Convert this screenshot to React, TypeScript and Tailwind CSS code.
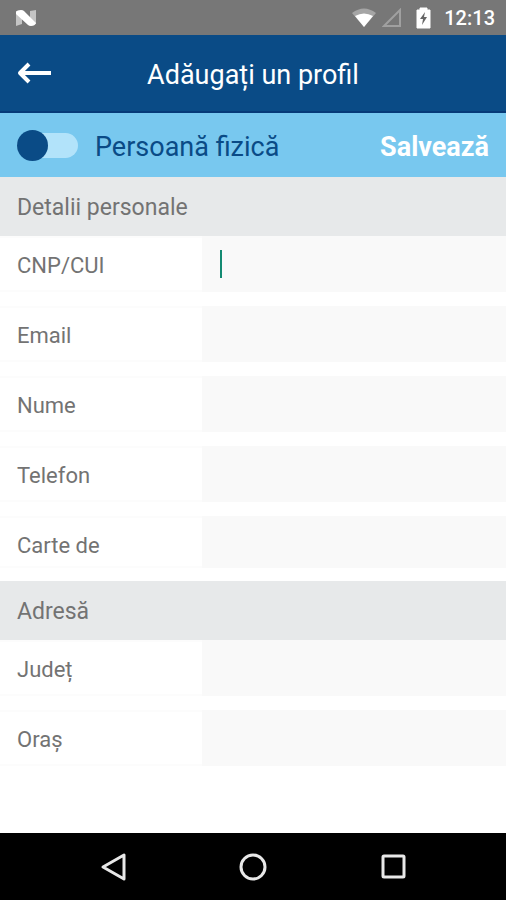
import { useState } from 'react';

type FieldProps = {
  id: string;
  label: string;
  active?: boolean;
  short?: boolean;
};

function SectionTitle({ children }: { children: string }) {
  return (
    <h2 className="h-[59px] bg-[#e7e9ea] px-[17px] text-[23px] leading-[61px] text-[#737373]">{children}</h2>
  );
}

function Field({ id, label, active, short }: FieldProps) {
  return (
    <div className={`flex overflow-hidden bg-[#f9f9f9] ${short ? 'h-[52px]' : 'h-14'}`}>
      <label
        htmlFor={id}
        className="w-2/5 shrink-0 border-y-2 border-[#fcfcfc] bg-white pl-[17px] text-[22px] leading-[56px] text-[#737373]"
      >
        {label}
      </label>
      <div className="flex min-w-0 flex-1 items-center pl-[18px]">
        {active && <span className="h-7 w-[2px] shrink-0 bg-[#138a72]" />}
        <input
          id={id}
          type="text"
          className="h-14 w-full min-w-0 bg-transparent pr-4 text-[22px] text-[#737373] outline-none"
        />
      </div>
    </div>
  );
}

function StatusBar() {
  return (
    <div className="flex h-[35px] items-center bg-[#777777] pr-[11px] pl-[15px] text-white">
      {/* Android N logo */}
      <svg width="22" height="18" viewBox="0 0 22 18">
        <path d="M1 2H7V15L1 17Z" fill="#c4c4c4" />
        <path d="M15 2L21 1V15H15Z" fill="#c4c4c4" />
        <path d="M1 3Q2 1 6 1Q8 1 9 2L21 14Q20 17 16 17Q14 17 13 16L1 5Z" fill="#ffffff" />
      </svg>
      <svg className="ml-auto" width="24" height="20" viewBox="0 0 24 20">
        <path d="M0 5Q12 -4 24 5L12 19Z" fill="#a5a5a5" />
        <path d="M3 8Q12 3 21 8L12 19Z" fill="#ffffff" />
      </svg>
      <svg className="ml-[6px]" width="20" height="20" viewBox="0 0 20 20">
        <path d="M2 18L18 2V18Z" fill="none" stroke="#a0a0a0" strokeWidth="2" />
      </svg>
      <svg className="ml-[14px]" width="15" height="22" viewBox="0 0 15 22">
        <path d="M1 3H4V1H11V3H14V21H1Z" fill="#ffffff" stroke="#ffffff" strokeLinejoin="round" />
        <path d="M9 5L4 12H7L6 18L11 10H8Z" fill="#666666" />
      </svg>
      <span className="ml-[13px] text-[20px] leading-none font-medium">12:13</span>
    </div>
  );
}

function NavBar() {
  return (
    <nav className="flex h-[67px] items-center justify-center gap-[112px] bg-black">
      <button type="button" aria-label="Back">
        <svg width="28" height="30" viewBox="0 0 28 30">
          <path d="M25 3V27L4 15Z" fill="none" stroke="#e8e8e8" strokeWidth="3" strokeLinejoin="round" />
        </svg>
      </button>
      <button type="button" aria-label="Home">
        <svg width="28" height="30" viewBox="0 0 28 30">
          <circle cx="14" cy="15" r="12" fill="none" stroke="#e8e8e8" strokeWidth="3" />
        </svg>
      </button>
      <button type="button" aria-label="Recents">
        <svg width="28" height="30" viewBox="0 0 28 30">
          <rect x="4" y="4" width="21" height="21" rx="1" fill="none" stroke="#e8e8e8" strokeWidth="3" />
        </svg>
      </button>
    </nav>
  );
}

export default function App() {
  const [company, setCompany] = useState(false);

  return (
    <div className="flex min-h-screen flex-col bg-white font-['Roboto',sans-serif]">
      <StatusBar />

      <header className="grid h-[78px] grid-cols-[1fr_auto_1fr] items-center border-b-2 border-[#063a78] bg-[#0a4b86] px-[17px] text-white">
        <button type="button" aria-label="Back" className="justify-self-start">
          <svg width="35" height="24" viewBox="0 0 35 24">
            <path
              d="M34 12H3M12 3L3 12L12 21"
              fill="none"
              stroke="#ffffff"
              strokeWidth="4"
              strokeLinejoin="round"
            />
          </svg>
        </button>
        <h1 className="pt-1 text-[27px] leading-none">Adăugați un profil</h1>
      </header>

      <form onSubmit={(e) => e.preventDefault()}>
        <div className="flex h-16 items-center bg-[#78c8ef] px-[17px] text-[27px] leading-8">
          <label className="flex items-center gap-[17px] text-[#0a4b86]">
            <input
              type="checkbox"
              role="switch"
              checked={company}
              onChange={(e) => setCompany(e.target.checked)}
              className="peer sr-only"
            />
            <span className="flex h-[25px] w-[61px] items-center rounded-full bg-[#b2e3fa] peer-checked:justify-end">
              <span className="size-[31px] rounded-full bg-[#0a4b86]" />
            </span>
            <span className="pt-1">Persoană fizică</span>
          </label>
          <button type="submit" className="ml-auto pt-1 font-bold text-white">
            Salvează
          </button>
        </div>

        <SectionTitle>Detalii personale</SectionTitle>
        <div className="flex flex-col gap-[14px] pb-[13px]">
          <Field id="cnp" label="CNP/CUI" active />
          <Field id="email" label="Email" />
          <Field id="nume" label="Nume" />
          <Field id="telefon" label="Telefon" />
          <Field id="carte" label="Carte de" short />
        </div>

        <SectionTitle>Adresă</SectionTitle>
        <div className="flex flex-col gap-[14px]">
          <Field id="judet" label="Județ" />
          <Field id="oras" label="Oraș" />
        </div>
      </form>

      <div className="mt-auto">
        <NavBar />
      </div>
    </div>
  );
}
